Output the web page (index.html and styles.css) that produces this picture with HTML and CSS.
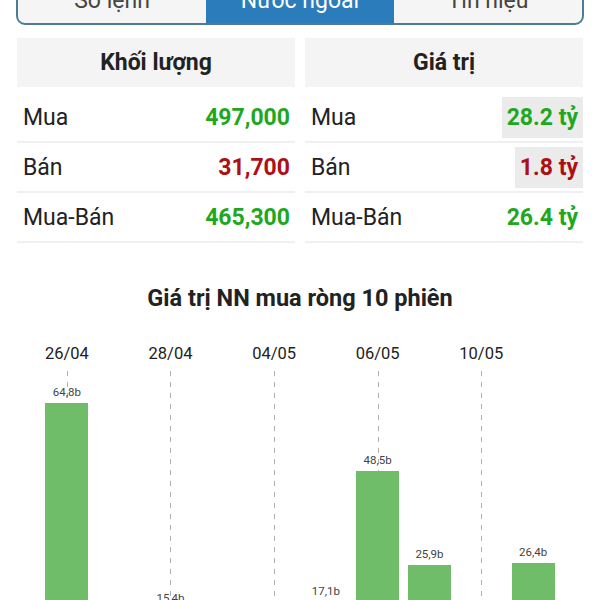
FILE: index.html
```html
<!doctype html>
<html>

<head>
    <meta charset="UTF-8">
    <title>Nước ngoài</title>
    <link rel="stylesheet" href="styles.css">
</head>

<body>
    <ul class="tabs">
        <li>Sổ lệnh</li>
        <li class="active">Nước ngoài</li>
        <li>Tín hiệu</li>
    </ul>

    <div class="panels">
        <div class="panel">
            <div class="panel-head">Khối lượng</div>
            <div class="row"><span class="label">Mua</span><span class="val up">497,000</span></div>
            <div class="row"><span class="label">Bán</span><span class="val down">31,700</span></div>
            <div class="row"><span class="label">Mua-Bán</span><span class="val up">465,300</span></div>
        </div>
        <div class="panel">
            <div class="panel-head">Giá trị</div>
            <div class="row"><span class="label">Mua</span><span class="val up flash">28.2 tỷ</span></div>
            <div class="row"><span class="label">Bán</span><span class="val down flash">1.8 tỷ</span></div>
            <div class="row"><span class="label">Mua-Bán</span><span class="val up">26.4 tỷ</span></div>
        </div>
    </div>

    <h2 class="chart-title">Giá trị NN mua ròng 10 phiên</h2>

    <div class="chart">
        <div class="col tick">
            <div class="date">26/04</div>
            <div class="plot"><span class="num">64,8b</span><div class="bar" style="height:270px"></div></div>
        </div>
        <div class="col">
            <div class="date"></div>
            <div class="plot"><span class="num">7,2b</span><div class="bar" style="height:30px"></div></div>
        </div>
        <div class="col tick">
            <div class="date">28/04</div>
            <div class="plot"><span class="num">15,4b</span><div class="bar" style="height:64px"></div></div>
        </div>
        <div class="col">
            <div class="date"></div>
            <div class="plot"><span class="num">3,1b</span><div class="bar" style="height:13px"></div></div>
        </div>
        <div class="col tick">
            <div class="date">04/05</div>
            <div class="plot"><span class="num">5,6b</span><div class="bar" style="height:23px"></div></div>
        </div>
        <div class="col">
            <div class="date"></div>
            <div class="plot"><span class="num">17,1b</span><div class="bar" style="height:71px"></div></div>
        </div>
        <div class="col tick">
            <div class="date">06/05</div>
            <div class="plot"><span class="num">48,5b</span><div class="bar" style="height:202px"></div></div>
        </div>
        <div class="col">
            <div class="date"></div>
            <div class="plot"><span class="num">25,9b</span><div class="bar" style="height:108px"></div></div>
        </div>
        <div class="col tick">
            <div class="date">10/05</div>
            <div class="plot"><span class="num">9,8b</span><div class="bar" style="height:41px"></div></div>
        </div>
        <div class="col">
            <div class="date"></div>
            <div class="plot"><span class="num">26,4b</span><div class="bar" style="height:110px"></div></div>
        </div>
    </div>
</body>

</html>
```

FILE: styles.css
```css
* {
    margin: 0;
    padding: 0;
    box-sizing: border-box;
}

body {
    font-family: Roboto, "Liberation Sans", sans-serif;
    color: #222;
    background-color: #fff;
}

/* tab bar, cut off at the top of the screen */
.tabs {
    list-style: none;
    display: flex;
    margin: -24px 16px 0;
    border: 2px solid #4d7c99;
    border-radius: 9px;
    overflow: hidden;
    background-color: #f5f5f5;
}

.tabs li {
    flex: 1;
    height: 45px;
    line-height: 46px;
    text-align: center;
    font-size: 23px;
    color: #444;
}

.tabs li.active {
    background-color: #2b7cba;
    color: #fff;
}

.panels {
    display: flex;
    gap: 10px;
    margin: 13px 17px 0;
}

.panel {
    flex: 1;
}

.panel-head {
    height: 49px;
    line-height: 49px;
    text-align: center;
    font-size: 23px;
    font-weight: bold;
    background-color: #f4f4f4;
    margin-bottom: 6px;
}

.row {
    display: flex;
    justify-content: space-between;
    align-items: center;
    height: 50px;
    padding-left: 6px;
    border-bottom: 2px solid #f0f0f0;
}

.row .label {
    font-size: 23px;
}

.row .val {
    font-size: 23px;
    font-weight: bold;
    line-height: 41px;
    padding: 0 5px;
}

.row .val.flash {
    background-color: #ebebeb;
}

.up {
    color: #1ea81e;
}

.down {
    color: #ad0f14;
}

.chart-title {
    margin-top: 41px;
    text-align: center;
    font-size: 23.5px;
    line-height: 28px;
    font-weight: bold;
}

.chart {
    display: flex;
    margin: 32px 41px 0;
}

.col {
    flex: 1;
    display: flex;
    flex-direction: column;
    align-items: center;
}

.date {
    height: 20px;
    line-height: 20px;
    font-size: 16.5px;
    margin-bottom: 7px;
    white-space: nowrap;
}

.plot {
    position: relative;
    width: 100%;
    height: 302px;
    display: flex;
    flex-direction: column;
    justify-content: flex-end;
    align-items: center;
}

/* dashed guide line under every date */
.tick .plot::before {
    content: "";
    position: absolute;
    top: 0;
    bottom: 0;
    left: 50%;
    width: 1px;
    background: repeating-linear-gradient(to bottom, #b0b0b0 0 5px, transparent 5px 11px);
}

.num {
    position: relative;
    font-size: 11.5px;
    line-height: 13px;
    color: #444;
    margin-bottom: 4px;
}

.bar {
    position: relative;
    width: 43px;
    background-color: #6fbc69;
}
```
